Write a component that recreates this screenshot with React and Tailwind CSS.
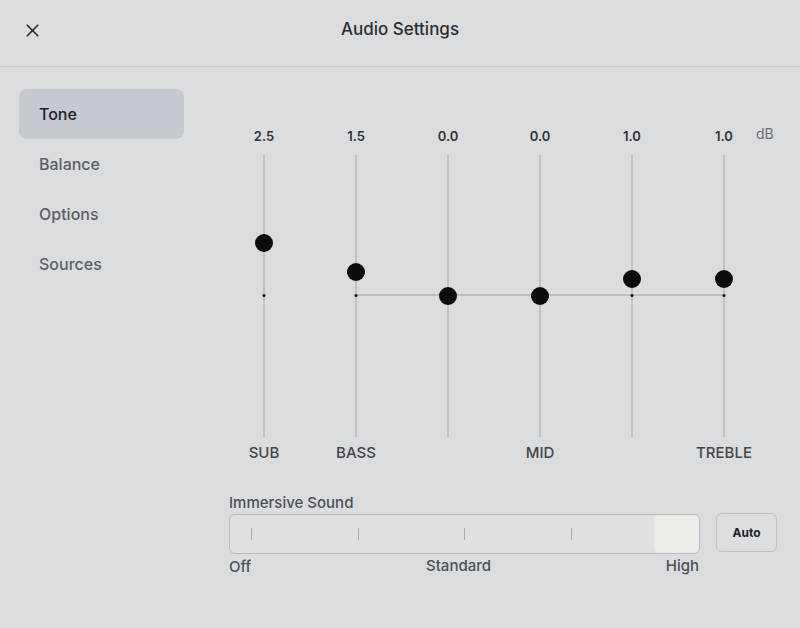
import { X } from 'lucide-react';

const bands = [
  { value: '2.5', label: 'SUB', knob: 243, marker: true },
  { value: '1.5', label: 'BASS', knob: 272, marker: true },
  { value: '0.0', label: '', knob: 296, marker: false },
  { value: '0.0', label: 'MID', knob: 296, marker: false },
  { value: '1.0', label: '', knob: 279, marker: true },
  { value: '1.0', label: 'TREBLE', knob: 279, marker: true },
];

const menu = ['Tone', 'Balance', 'Options', 'Sources'];

// track spans y=155..437 on the page
const TRACK_TOP = 155;

const App = () => {
  return (
    <div
      className="w-[800px] h-[628px] overflow-hidden bg-[#dbdcde] text-[#2b2e33]"
      style={{ fontFamily: 'Inter, Roboto, "Liberation Sans", sans-serif' }}
    >
      {/* Header */}
      <div className="relative h-[67px] border-b border-[#c9cbce] flex items-center justify-center">
        <button className="absolute left-[22px] top-[20px] text-[#25282c]">
          <X size={21} strokeWidth={1.8} />
        </button>
        <h1 className="text-[17px] font-medium -mt-[6px]">Audio Settings</h1>
      </div>

      <div className="flex">
        {/* Sidebar */}
        <div className="w-[218px] pl-[19px] pr-[34px] pt-[22px] flex flex-col">
          {menu.map((item, i) => (
            <div
              key={item}
              className={`h-[50px] rounded-[8px] pl-[20px] flex items-center text-[16px] font-medium ${
                i === 0 ? 'bg-[#c6c9d0] text-[#1f2226]' : 'text-[#5a5f69]'
              }`}
            >
              {item}
            </div>
          ))}
        </div>

        {/* Equalizer */}
        <div className="flex-1 pt-[61px]">
          <div className="grid grid-cols-[repeat(6,92px)]">
            {bands.map((b, i) => (
              <div key={i} className="relative h-4 flex justify-center text-[13px] leading-4 font-semibold text-[#2f3237]">
                {b.value}
                {i === 5 && (
                  <span className="absolute left-[78px] top-[-2px] text-[14px] font-normal text-[#6b7078]">dB</span>
                )}
              </div>
            ))}
          </div>

          <div className="relative mt-[11px] grid grid-cols-[repeat(6,92px)] h-[282px]">
            {/* zero line from BASS to TREBLE */}
            <div className="absolute left-[138px] w-[368px] top-[139px] h-[2px] bg-[#bcc0c5]" />
            {bands.map((b, i) => (
              <div key={i} className="relative flex justify-center">
                <div className="w-[2px] h-full bg-[#bec2c7]" />
                {b.marker && (
                  <div className="absolute left-1/2 -translate-x-1/2 top-[139px] w-[3px] h-[3px] rounded-full bg-[#111]" />
                )}
                <div
                  className="absolute left-1/2 -translate-x-1/2 w-[18px] h-[18px] rounded-full bg-[#0c0c0d]"
                  style={{ top: b.knob - TRACK_TOP - 9 }}
                />
              </div>
            ))}
          </div>

          <div className="mt-[8px] grid grid-cols-[repeat(6,92px)]">
            {bands.map((b, i) => (
              <div key={i} className="flex justify-center text-[15px] leading-4 font-medium text-[#42464c]">
                {b.label}
              </div>
            ))}
          </div>

          {/* Immersive Sound */}
          <div className="pl-[11px] mt-[34px]">
            <div className="text-[15px] leading-4 font-medium text-[#4c5057]">Immersive Sound</div>
            <div className="mt-[3px] flex items-center gap-[16px]">
              <div className="relative w-[471px] h-[40px] rounded-[6px] border border-[#b7babe] bg-[#dfe0e2] flex items-center justify-between px-[21px]">
                <div className="absolute right-0 top-0 w-[45px] h-full rounded-[5px] bg-[#ebece6]" />
                <div className="w-[1px] h-[12px] bg-[#a7abb0]" />
                <div className="w-[1px] h-[12px] bg-[#a7abb0]" />
                <div className="w-[1px] h-[12px] bg-[#a7abb0]" />
                <div className="w-[1px] h-[12px] bg-[#a7abb0]" />
                <div className="w-[1px] h-[12px] bg-transparent" />
              </div>
              <button className="w-[61px] h-[39px] -mt-[3px] rounded-[6px] border border-[#bfc2c6] bg-[#dcdee0] text-[12px] font-bold text-[#1f2226]">
                Auto
              </button>
            </div>
            <div className="w-[471px] mt-[4px] flex justify-between text-[15px] leading-4 font-medium text-[#4c5057]">
              <span className="mt-[1px]">Off</span>
              <span>Standard</span>
              <span className="pr-[1px]">High</span>
            </div>
          </div>
        </div>
      </div>
    </div>
  );
};

export default App;
